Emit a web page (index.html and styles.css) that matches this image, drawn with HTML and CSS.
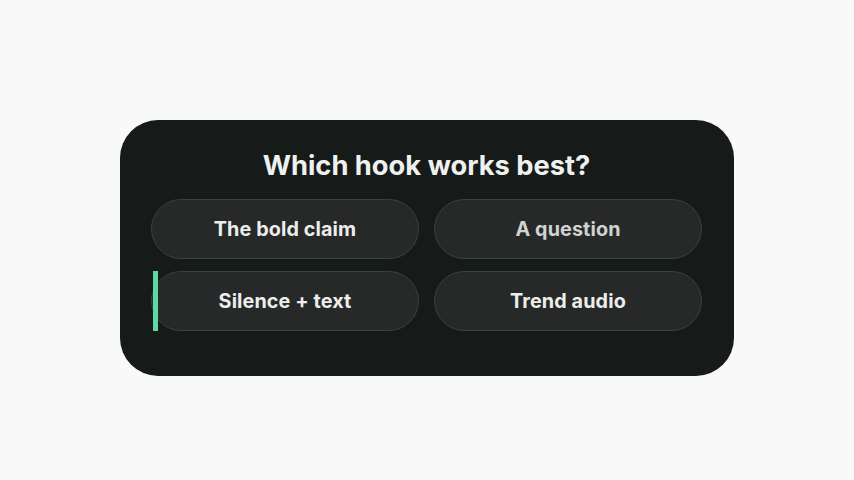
FILE: index.html
```html
<!DOCTYPE html>
<html>
<head>
<meta charset="utf-8">
<link rel="stylesheet" href="styles.css">
</head>
<body>
<div class="stage">
  <div class="card">
    <h1 class="title">Which hook works best?</h1>
    <div class="options">
      <button class="option">The bold claim</button>
      <button class="option dim">A question</button>
      <button class="option selected"><span class="marker"></span>Silence + text</button>
      <button class="option">Trend audio</button>
    </div>
  </div>
</div>
</body>
</html>
```
FILE: styles.css
```css
* { box-sizing: border-box; }
html, body { margin: 0; padding: 0; }
body {
  background: #f9f9f9;
  font-family: Inter, "Noto Sans", sans-serif;
  width: 854px;
  height: 480px;
}
.stage {
  display: flex;
  justify-content: center;
  padding-top: 120px;
}
.card {
  width: 614px;
  height: 256px;
  background: #161a19;
  border-radius: 38px;
  padding: 31px 32px 45px 31px;
  display: flex;
  flex-direction: column;
  align-items: stretch;
}
.title {
  margin: 0 0 18px 0;
  text-align: center;
  color: #eef1ef;
  font-size: 27.3px;
  font-weight: 700;
  line-height: 30px;
  letter-spacing: 0;
}
.options {
  display: grid;
  grid-template-columns: 268px 268px;
  column-gap: 15px;
  row-gap: 12px;
}
.option {
  position: relative;
  height: 60px;
  border-radius: 30px;
  background: #262928;
  border: 1px solid #34443f;
  color: #eceeed;
  font-family: Inter, "Noto Sans", sans-serif;
  font-size: 19.8px;
  font-weight: 700;
  letter-spacing: 0.1px;
  padding: 0;
  display: flex;
  align-items: center;
  justify-content: center;
}
.option.dim { color: #cfd3d1; }
.marker {
  position: absolute;
  left: 1px;
  top: -1px;
  width: 5px;
  height: 60px;
  background: #5ed9a1;
}
```
